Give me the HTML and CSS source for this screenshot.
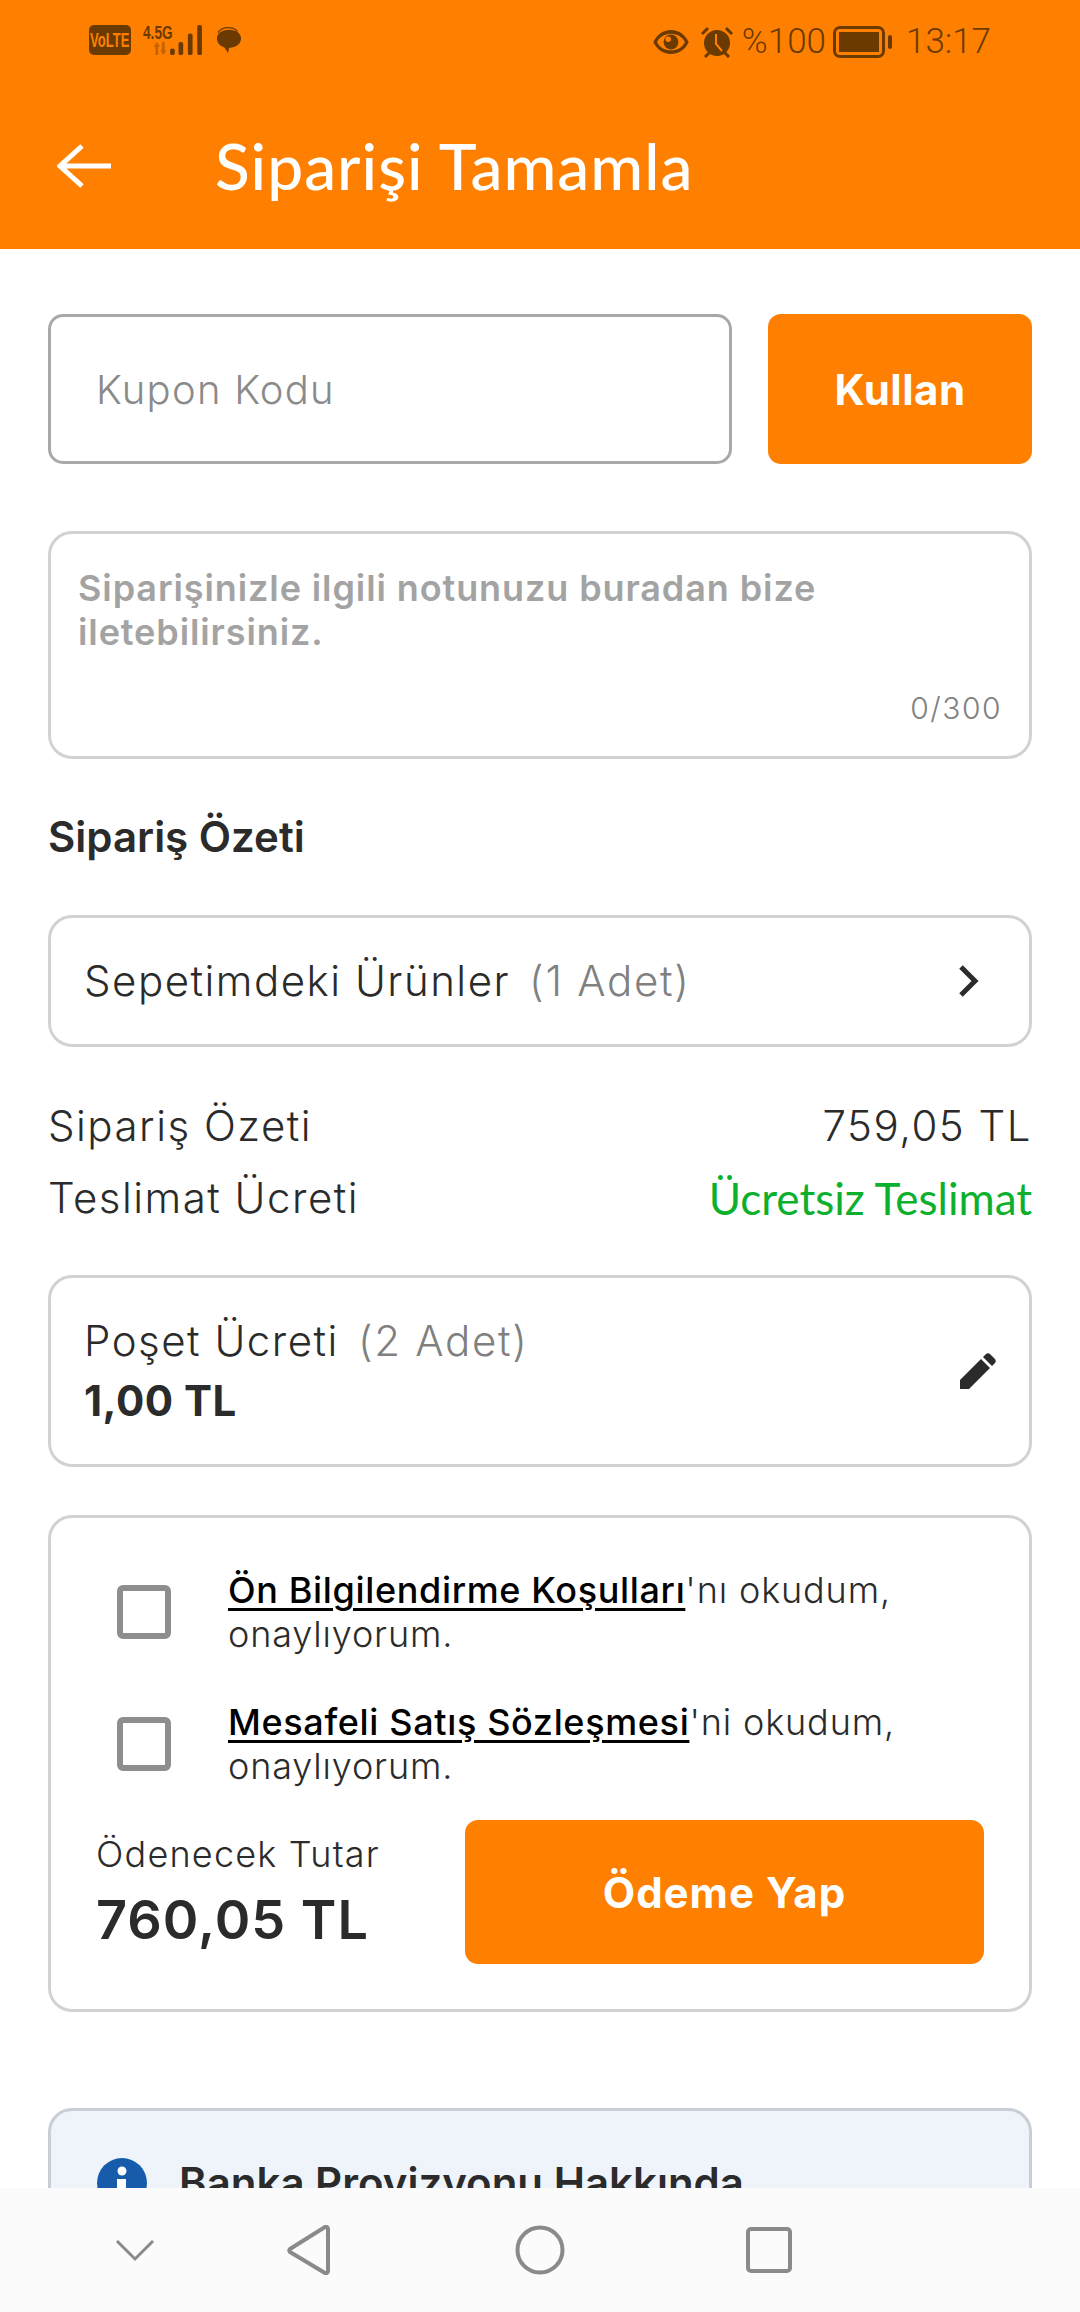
FILE: index.html
```html
<!DOCTYPE html>
<html lang="tr">
<head>
<meta charset="utf-8">
<title>Siparişi Tamamla</title>
<link rel="stylesheet" href="styles.css">
</head>
<body>
<div class="screen">
  <header class="appbar">
    <div class="status">
      <div class="status-left">
        <span class="volte"><span class="narrow">VoLTE</span></span>
        <span class="net">
          <span class="net-label"><span class="narrow">4.5G</span></span>
          <svg class="net-arrows" viewBox="0 0 16 14" width="15" height="13"><path d="M4 0l3.500 5H5.500v9h-3V5H.5zM11 14L7.500 9h2V0h3v9h2z" fill="#6b3a00" opacity=".4"/></svg>
        </span>
        <svg class="bars" viewBox="0 0 34 32" width="32" height="30"><g fill="#6b3a00"><rect x="0" y="25" width="5" height="7" rx="2"/><rect x="9" y="18" width="5" height="14" rx="2"/><rect x="19" y="9" width="5" height="23" rx="2"/><rect x="29" y="0" width="5" height="32" rx="2"/></g></svg>
        <svg class="bubble" viewBox="0 0 28 30" width="26" height="28"><path d="M14 4C6 4 1 8 1 13.500c0 4.500 3 8 8 9.500l4 6c.5-2 .5-4 1-5.500 8 0 13-4.500 13-10S22 4 14 4z" fill="#6b3a00"/><path d="M2 7c3-4 8-6 14-5 3 .5 6 2 7 4" fill="none" stroke="#6b3a00" stroke-width="1.500"/></svg>
      </div>
      <div class="status-right">
        <svg class="eye" viewBox="0 0 40 28" width="38" height="26"><path d="M20 1C11 1 4 7 1 14c3 7 10 13 19 13s16-6 19-13C36 7 29 1 20 1zm0 4c7 0 13 4 15 9-2 5-8 9-15 9S7 19 5 14c2-5 8-9 15-9z" fill="#6b3a00"/><circle cx="20" cy="14" r="8" fill="#6b3a00"/><circle cx="17" cy="11" r="3" fill="#ff8000"/></svg>
        <svg class="alarm" viewBox="0 0 34 32" width="34" height="32"><circle cx="17" cy="17" r="13" fill="#6b3a00"/><path d="M2 8l6-6M32 8l-6-6M5 31l4-4M29 31l-4-4" stroke="#6b3a00" stroke-width="3" fill="none"/><path d="M16 8v10l6 7" stroke="#ff8000" stroke-width="2" fill="none"/></svg>
        <span class="percent">%100</span>
        <span class="battery"><span class="battery-fill"></span></span>
        <span class="battery-tip"></span>
        <span class="clock">13:17</span>
      </div>
    </div>
    <div class="toolbar">
      <svg class="back" viewBox="0 0 54 44" width="54" height="44"><path d="M25 2L3 22l22 20M3 22h51" fill="none" stroke="#fff" stroke-width="5"/></svg>
      <h1 class="title">Siparişi Tamamla</h1>
    </div>
  </header>

  <main class="content">
    <div class="coupon">
      <div class="coupon-input">Kupon Kodu</div>
      <div class="btn coupon-btn">Kullan</div>
    </div>

    <div class="box note">
      <p class="note-text">Siparişinizle ilgili notunuzu buradan bize iletebilirsiniz.</p>
      <span class="note-count">0/300</span>
    </div>

    <h2 class="section">Sipariş Özeti</h2>

    <div class="box row-box">
      <span class="row-label">Sepetimdeki Ürünler<span class="muted">(1 Adet)</span></span>
      <svg class="chev" viewBox="0 0 22 34" width="22" height="34"><path d="M3 3l14 14L3 31" fill="none" stroke="#2b2b2b" stroke-width="5"/></svg>
    </div>

    <div class="summary">
      <div class="summary-row"><span>Sipariş Özeti</span><span>759,05 TL</span></div>
      <div class="summary-row second"><span>Teslimat Ücreti</span><span class="free">Ücretsiz Teslimat</span></div>
    </div>

    <div class="box bag">
      <div>
        <div class="row-label">Poşet Ücreti<span class="muted">(2 Adet)</span></div>
        <div class="bag-price">1,00 TL</div>
      </div>
      <svg class="pen" viewBox="0 0 36 36" width="36" height="36"><path d="M0 36v-9L21 6l9 9L9 36zM23 4l3-3c1-1 3-1 4 0l5 5c1 1 1 3 0 4l-3 3z" fill="#2b2b2b"/></svg>
    </div>

    <div class="box pay">
      <div class="agree">
        <span class="check"></span>
        <p class="agree-text"><a class="link">Ön Bilgilendirme Koşulları</a>'nı okudum, onaylıyorum.</p>
      </div>
      <div class="agree second-agree">
        <span class="check"></span>
        <p class="agree-text"><a class="link">Mesafeli Satış Sözleşmesi</a>'ni okudum, onaylıyorum.</p>
      </div>
      <div class="pay-bottom">
        <div class="total">
          <div class="total-label">Ödenecek Tutar</div>
          <div class="total-value">760,05 TL</div>
        </div>
        <div class="btn pay-btn">Ödeme Yap</div>
      </div>
    </div>

    <div class="box info">
      <svg class="info-icon" viewBox="0 0 50 50" width="50" height="50"><circle cx="25" cy="25" r="25" fill="#175cab"/><circle cx="25" cy="13" r="4.500" fill="#fff"/><rect x="20" y="21" width="9" height="18" fill="#fff"/></svg>
      <span class="info-title">Banka Provizyonu Hakkında</span>
    </div>
  </main>

  <nav class="navbar">
    <svg viewBox="0 0 40 24" width="40" height="24" class="nav-down"><path d="M2 3l18 18L38 3" fill="none" stroke="#8a8a8a" stroke-width="3"/></svg>
    <svg viewBox="0 0 44 50" width="44" height="50" class="nav-back"><path d="M41 4v42c0 2-2 3-3 2L3 27c-1-1-1-2 0-3L38 2c1-1 3 0 3 2z" fill="none" stroke="#8a8a8a" stroke-width="4" stroke-linejoin="round"/></svg>
    <svg viewBox="0 0 50 50" width="50" height="50" class="nav-home"><circle cx="25" cy="25" r="22.500" fill="none" stroke="#8a8a8a" stroke-width="4"/></svg>
    <svg viewBox="0 0 46 46" width="46" height="46" class="nav-recent"><rect x="2" y="2" width="42" height="42" rx="3" fill="none" stroke="#8a8a8a" stroke-width="4"/></svg>
  </nav>
</div>
</body>
</html>
```

FILE: styles.css
```css
* { box-sizing: border-box; }
html, body { margin: 0; padding: 0; background: #fff; }
body { font-family: "Inter", "Liberation Sans", sans-serif; color: #2b2b2b; }
.screen { width: 1080px; height: 2312px; position: relative; overflow: hidden; background: #fff; }

.appbar { height: 249px; background: #ff8000; }
.status { height: 80px; padding: 22px 89px 0 89px; display: flex; justify-content: space-between; align-items: flex-start; color: #6b3a00; }
.status-left, .status-right { display: flex; align-items: center; }
.status-left { margin-top: 3px; }
.narrow { display: inline-block; transform: scaleX(.62); transform-origin: center; }
.volte { width: 42px; height: 30px; background: #6b3a00; color: #ff8000; border-radius: 5px; font: 700 21px/30px "Liberation Sans", sans-serif; text-align: center; white-space: nowrap; overflow: hidden; display: flex; justify-content: center; }
.net { display: flex; flex-direction: column; align-items: flex-end; width: 27px; margin-left: 12px; height: 30px; }
.net-label { font: 700 18px/16px "Liberation Sans", sans-serif; align-self: flex-start; white-space: nowrap; }
.net-label .narrow { transform: scaleX(.76); transform-origin: left; }
.net-arrows { margin-top: 1px; margin-right: 2px; }
.bubble { margin-left: 14px; }
.status-right { height: 40px; }
.eye { margin-right: 10px; }
.alarm { margin-right: 8px; }
.percent { font: 300 35px/40px "Roboto", sans-serif; margin-right: 7px; }
.battery { width: 52px; height: 32px; border: 3px solid #6b3a00; border-radius: 7px; padding: 3px; display: block; }
.battery-fill { display: block; height: 100%; background: #6b3a00; }
.battery-tip { width: 4px; height: 14px; background: #6b3a00; border-radius: 2px; margin: 0 14px 0 3px; }
.clock { font: 300 35px/40px "Roboto", sans-serif; }

.toolbar { height: 169px; display: flex; align-items: center; padding: 2px 0 0 57px; }
.title { margin: 0 0 0 104px; font: 500 64px/76px "Lato", sans-serif; color: #fff; letter-spacing: 1px; }

.content { padding: 65px 48px 0 48px; }
.coupon { display: flex; gap: 36px; height: 150px; }
.coupon-input { flex: 1; border: 3px solid #a8a8a8; border-radius: 15px; padding-left: 45px; display: flex; align-items: center; font-size: 40px; color: #8a8a8a; letter-spacing: 1.25px; font-weight: 350; }
.btn { background: #ff8000; color: #fff; font-weight: 700; border-radius: 13px; display: flex; align-items: center; justify-content: center; }
.coupon-btn { width: 264px; font-size: 42px; letter-spacing: .5px; }

.box { border: 3px solid #d2d2d2; border-radius: 24px; background: #fff; }
.note { margin-top: 67px; height: 228px; padding: 32px 27px 0; position: relative; }
.note-text { margin: 0; font-size: 36px; line-height: 44px; font-weight: 600; color: #a3a3a3; letter-spacing: .9px; }
.note-count { position: absolute; right: 27px; bottom: 30px; font-size: 30px; line-height: 36px; color: #808080; letter-spacing: 1.5px; font-weight: 350; }

.section { margin: 54px 0 0; font-size: 42px; line-height: 48px; font-weight: 600; color: #2b2b2b; }

.row-box { margin-top: 54px; height: 132px; padding: 0 49px 0 33px; display: flex; align-items: center; justify-content: space-between; }
.row-label { font-size: 42px; line-height: 48px; letter-spacing: 1.5px; font-weight: 350; }
.muted { color: #808080; margin-left: 19px; letter-spacing: 1.7px; }

.summary { margin-top: 55px; font-size: 42px; line-height: 48px; letter-spacing: 1.5px; font-weight: 350; }
.summary-row { display: flex; justify-content: space-between; }
.summary-row.second { margin-top: 24px; }
.free { color: #0cb02c; font-family: "Lato", sans-serif; font-size: 44px; font-weight: 400; letter-spacing: 0; }

.bag { margin-top: 53px; height: 192px; padding: 0 33px 0 33px; display: flex; align-items: center; justify-content: space-between; }
.bag-price { margin-top: 12px; font-size: 42px; line-height: 48px; font-weight: 700; letter-spacing: .5px; }

.pay { margin-top: 48px; height: 497px; padding: 50px 45px 0 45px; }
.agree { display: flex; align-items: center; }
.check { width: 54px; height: 54px; margin-left: 21px; border: 6px solid #8e8e8e; border-radius: 6px; flex: none; }
.agree-text { margin: 0 0 0 57px; font-size: 36px; line-height: 44px; color: #2b2b2b; letter-spacing: .85px; font-weight: 350; }
.link { color: #000; font-weight: 500; letter-spacing: .65px; text-decoration: underline; text-decoration-thickness: 3px; text-underline-offset: 5px; }
.second-agree { margin-top: 44px; }
.pay-bottom { margin-top: 32px; display: flex; justify-content: space-between; align-items: center; }
.total-label { font-size: 36px; line-height: 44px; letter-spacing: 1.2px; font-weight: 350; }
.total-value { margin-top: 11px; font-size: 54px; line-height: 66px; font-weight: 600; letter-spacing: 1px; }
.pay-btn { width: 519px; height: 144px; font-size: 42px; letter-spacing: 1px; }

.info { margin-top: 96px; height: 300px; background: #eff4fb; border-color: #c8ced6; padding: 47px 46px 0; display: flex; align-items: flex-start; gap: 32px; }
.info-icon { flex: none; }
.info-title { font-size: 42px; line-height: 50px; font-weight: 600; }

.navbar { position: absolute; left: 0; right: 0; bottom: 0; height: 124px; background: #fbfbfb; }
.navbar svg { position: absolute; }
.nav-down { left: 115px; top: 50px; }
.nav-back { left: 287px; top: 37px; }
.nav-home { left: 515px; top: 37px; }
.nav-recent { left: 746px; top: 39px; }
```
